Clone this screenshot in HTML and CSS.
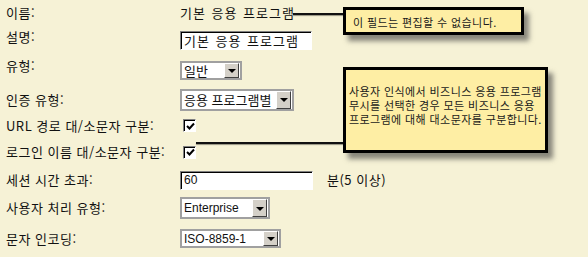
FILE: index.html
```html
<!DOCTYPE html>
<html lang="ko">
<head>
<meta charset="utf-8">
<link rel="stylesheet" href="styles.css">
</head>
<body>
<div class="form">
  <div class="row h1"><div class="label">이름:</div><div class="ctrl"><span class="value">기본 응용 프로그램</span></div></div>
  <div class="row h2"><div class="label up3">설명:</div><div class="ctrl"><div class="text w132">기본 응용 프로그램</div></div></div>
  <div class="row h3"><div class="label up5">유형:</div><div class="ctrl"><div class="select w62"><span class="opt">일반</span><span class="arrow"></span></div></div></div>
  <div class="row h4"><div class="label">인증 유형:</div><div class="ctrl"><div class="select w114 tall"><span class="opt">응용 프로그램별</span><span class="arrow"></span></div></div></div>
  <div class="row h5"><div class="label">URL 경로 대/소문자 구분:</div><div class="ctrl"><span class="check"><svg viewBox="0 0 9 9" width="9" height="9"><path d="M1 4 L3.5 6.5 L8 1.5" fill="none" stroke="#000" stroke-width="2"/></svg></span></div></div>
  <div class="row h6"><div class="label">로그인 이름 대/소문자 구분:</div><div class="ctrl"><span class="check"><svg viewBox="0 0 9 9" width="9" height="9"><path d="M1 4 L3.5 6.5 L8 1.5" fill="none" stroke="#000" stroke-width="2"/></svg></span></div></div>
  <div class="row h7"><div class="label">세션 시간 초과:</div><div class="ctrl"><div class="text w133 latin">60</div><span class="unit">분(5 이상)</span></div></div>
  <div class="row h8"><div class="label">사용자 처리 유형:</div><div class="ctrl"><div class="select w90 tall latin"><span class="opt">Enterprise</span><span class="arrow"></span></div></div></div>
  <div class="row h9"><div class="label">문자 인코딩:</div><div class="ctrl"><div class="select w101 latin"><span class="opt">ISO-8859-1</span><span class="arrow"></span></div></div></div>
</div>

<div class="leader l1"></div>
<div class="callout c1">이 필드는 편집할 수 없습니다.</div>
<div class="leader l2"></div>
<div class="callout c2"><div>사용자 인식에서 비즈니스 응용 프로그램</div><div>무시를 선택한 경우 모든 비즈니스 응용</div><div>프로그램에 대해 대소문자를 구분합니다.</div></div>
</body>
</html>
```

FILE: styles.css
```css
html, body {
  margin: 0;
  padding: 0;
  background: #f6f2d6;
}
body {
  font-family: "Noto Sans CJK KR", "Liberation Sans", sans-serif;
  font-size: 13px;
  letter-spacing: 0.5px;
  color: #111;
  width: 588px;
  height: 257px;
  overflow: hidden;
  position: relative;
}
.form {
  display: flex;
  flex-direction: column;
}
.row {
  display: grid;
  grid-template-columns: 180px 1fr;
  align-items: center;
}
.h1 { height: 26px; }
.h2 { height: 28px; }
.h3 { height: 33px; }
.h4 { height: 25px; }
.h5 { height: 27px; }
.h6 { height: 26px; }
.h7 { height: 30px; }
.h8 { height: 26px; }
.h9 { height: 35px; }
.label {
  padding-left: 6px;
  line-height: 16px;
  white-space: nowrap;
}
.up3 { margin-bottom: 6px; }
.up5 { margin-bottom: 10px; }
.ctrl {
  display: flex;
  align-items: center;
  line-height: 16px;
}
.value, .text {
  letter-spacing: 1px;
  word-spacing: 1px;
}
.text {
  box-sizing: border-box;
  height: 19px;
  background: #fff;
  border-top: 1px solid #808080;
  border-left: 1px solid #808080;
  border-right: 1px solid #fff;
  border-bottom: 1px solid #fff;
  box-shadow: inset 1px 1px 0 #000;
  padding: 0 0 0 3px;
  line-height: 17px;
  white-space: nowrap;
}
.w132 { width: 132px; }
.w133 { width: 133px; }
.latin, .latin .opt { font-family: "Liberation Sans", sans-serif; font-size: 12px; letter-spacing: 0; word-spacing: 0; }
.unit { margin-left: 14px; }
.select {
  box-sizing: border-box;
  height: 19px;
  display: flex;
  align-items: stretch;
  background: #fff;
  border: 2px solid #a0a0a0;
}
.select.tall { height: 22px; }
.w62 { width: 62px; }
.w114 { width: 114px; }
.w90 { width: 90px; }
.w101 { width: 101px; }
.opt {
  flex: 1;
  padding-left: 2px;
  display: flex;
  align-items: center;
  white-space: nowrap;
  letter-spacing: 0;
  word-spacing: 0;
}
.arrow {
  box-sizing: border-box;
  flex: none;
  width: 15px;
  margin: 0 1px 0 0;
  background: #d4d0c8;
  border-top: 1px solid #fff;
  border-left: 1px solid #fff;
  border-right: 1px solid #404040;
  border-bottom: 1px solid #404040;
  display: flex;
  align-items: center;
  justify-content: center;
}
.arrow::after {
  content: "";
  border-left: 4px solid transparent;
  border-right: 4px solid transparent;
  border-top: 4px solid #000;
  margin-top: 1px;
}
.check {
  box-sizing: border-box;
  width: 13px;
  height: 13px;
  margin-left: 3px;
  background: #fff;
  border-top: 1px solid #808080;
  border-left: 1px solid #808080;
  border-right: 1px solid #fff;
  border-bottom: 1px solid #fff;
  box-shadow: inset 1px 1px 0 #000;
  display: flex;
  align-items: center;
  justify-content: center;
  padding: 1px 0 0 1px;
}
.callout {
  position: absolute;
  box-sizing: border-box;
  background: #feeea4;
  border: 3px solid #000;
  box-shadow: 5px 6px 5px rgba(60, 60, 60, 0.6);
  font-size: 11px;
  letter-spacing: 0.4px;
  line-height: 14px;
  color: #1a1a1a;
  white-space: nowrap;
}
.c1 {
  left: 343px;
  top: 7px;
  width: 181px;
  height: 28px;
  padding: 5px 0 0 7px;
}
.c2 {
  left: 343px;
  top: 67px;
  width: 205px;
  height: 86px;
  padding: 14px 0 0 3px;
  display: flex;
  flex-direction: column;
}
.leader {
  position: absolute;
  height: 2px;
  background: #111;
  box-shadow: 0 1px 1px rgba(0, 0, 0, 0.4);
}
.l1 { left: 293px; top: 13px; width: 52px; }
.l2 { left: 196px; top: 142px; width: 149px; }
```
